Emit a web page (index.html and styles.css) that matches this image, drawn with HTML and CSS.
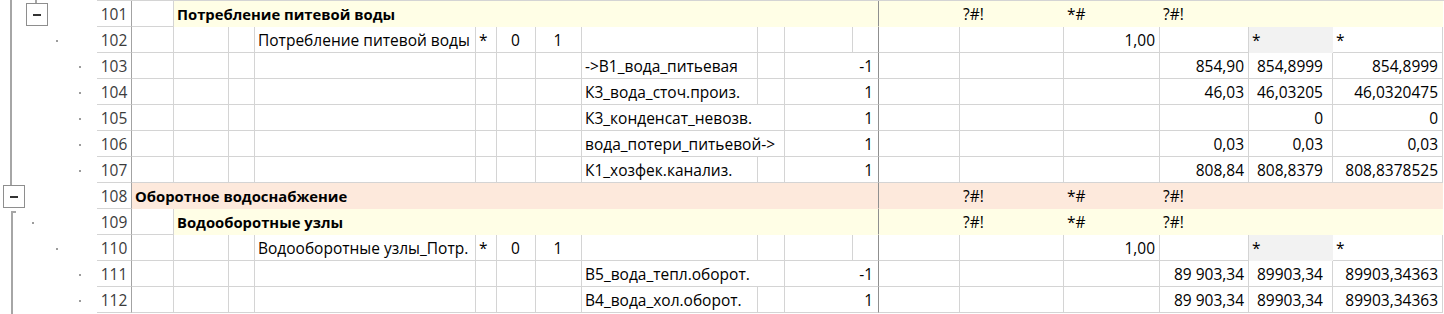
FILE: index.html
```html
<!DOCTYPE html>
<html lang="ru">
<head>
<meta charset="utf-8">
<title>Sheet</title>
<link rel="stylesheet" href="styles.css">
</head>
<body>
<div class="sheet">
  <div class="outline">
    <span class="oline oline-a"></span>
    <span class="oline oline-b"></span>
    <span class="obracket"></span>
    <div class="orow"><span class="obox l2"></span></div>
    <div class="orow"><span class="odot l3"></span></div>
    <div class="orow"><span class="odot l4"></span></div>
    <div class="orow"><span class="odot l4"></span></div>
    <div class="orow"><span class="odot l4"></span></div>
    <div class="orow"><span class="odot l4"></span></div>
    <div class="orow"><span class="odot l4"></span></div>
    <div class="orow"><span class="obox l1"></span></div>
    <div class="orow"><span class="odot l2"></span></div>
    <div class="orow"><span class="odot l3"></span></div>
    <div class="orow"><span class="odot l4"></span></div>
    <div class="orow"><span class="odot l4"></span></div>
  </div>

  <div class="grid">
    <!-- 101 -->
    <div class="row">
      <div class="hdr">101</div>
      <div></div>
      <div class="y b span-3-12 frz">Потребление питевой воды</div>
      <div class="y"></div>
      <div class="y">?#!</div>
      <div class="y">*#</div>
      <div class="y">?#!</div>
      <div class="y"></div>
      <div class="y"></div>
    </div>
    <!-- 102 -->
    <div class="row">
      <div class="hdr">102</div>
      <div></div><div></div><div></div>
      <div>Потребление питевой воды</div>
      <div>*</div>
      <div class="c">0</div>
      <div class="c">1</div>
      <div></div><div></div><div></div>
      <div class="frz"></div>
      <div></div><div></div>
      <div class="r">1,00</div>
      <div></div>
      <div class="g">*</div>
      <div>*</div>
    </div>
    <!-- 103 -->
    <div class="row">
      <div class="hdr">103</div>
      <div></div><div></div><div></div><div></div><div></div><div></div><div></div>
      <div>-&gt;В1_вода_питьевая</div>
      <div></div>
      <div class="r frz span-11-12">-1</div>
      <div></div><div></div><div></div>
      <div class="r">854,90</div>
      <div class="r p9">854,8999</div>
      <div class="r">854,8999</div>
    </div>
    <!-- 104 -->
    <div class="row">
      <div class="hdr">104</div>
      <div></div><div></div><div></div><div></div><div></div><div></div><div></div>
      <div>К3_вода_сточ.произ.</div>
      <div></div>
      <div class="r frz span-11-12">1</div>
      <div></div><div></div><div></div>
      <div class="r">46,03</div>
      <div class="r p9">46,03205</div>
      <div class="r">46,0320475</div>
    </div>
    <!-- 105 -->
    <div class="row">
      <div class="hdr">105</div>
      <div></div><div></div><div></div><div></div><div></div><div></div><div></div>
      <div class="span-9-10">К3_конденсат_невозв.</div>
      <div class="r frz span-11-12">1</div>
      <div></div><div></div><div></div>
      <div class="r"></div>
      <div class="r p9">0</div>
      <div class="r">0</div>
    </div>
    <!-- 106 -->
    <div class="row">
      <div class="hdr">106</div>
      <div></div><div></div><div></div><div></div><div></div><div></div><div></div>
      <div class="span-9-10">вода_потери_питьевой-&gt;</div>
      <div class="r frz span-11-12">1</div>
      <div></div><div></div><div></div>
      <div class="r">0,03</div>
      <div class="r p9">0,03</div>
      <div class="r">0,03</div>
    </div>
    <!-- 107 -->
    <div class="row">
      <div class="hdr">107</div>
      <div></div><div></div><div></div><div></div><div></div><div></div><div></div>
      <div>К1_хозфек.канализ.</div>
      <div></div>
      <div class="r frz span-11-12">1</div>
      <div></div><div></div><div></div>
      <div class="r">808,84</div>
      <div class="r p9">808,8379</div>
      <div class="r">808,8378525</div>
    </div>
    <!-- 108 -->
    <div class="row">
      <div class="hdr">108</div>
      <div class="o b span-2-12 frz">Оборотное водоснабжение</div>
      <div class="o"></div>
      <div class="o">?#!</div>
      <div class="o">*#</div>
      <div class="o">?#!</div>
      <div class="o"></div>
      <div class="o"></div>
    </div>
    <!-- 109 -->
    <div class="row">
      <div class="hdr">109</div>
      <div></div>
      <div class="y b span-3-12 frz">Водооборотные узлы</div>
      <div class="y"></div>
      <div class="y">?#!</div>
      <div class="y">*#</div>
      <div class="y">?#!</div>
      <div class="y"></div>
      <div class="y"></div>
    </div>
    <!-- 110 -->
    <div class="row">
      <div class="hdr">110</div>
      <div></div><div></div><div></div>
      <div>Водооборотные узлы_Потр.</div>
      <div>*</div>
      <div class="c">0</div>
      <div class="c">1</div>
      <div></div><div></div><div></div>
      <div class="frz"></div>
      <div></div><div></div>
      <div class="r">1,00</div>
      <div></div>
      <div class="g">*</div>
      <div>*</div>
    </div>
    <!-- 111 -->
    <div class="row">
      <div class="hdr">111</div>
      <div></div><div></div><div></div><div></div><div></div><div></div><div></div>
      <div class="span-9-10">В5_вода_тепл.оборот.</div>
      <div class="r frz span-11-12">-1</div>
      <div></div><div></div><div></div>
      <div class="r">89 903,34</div>
      <div class="r p9">89903,34</div>
      <div class="r">89903,34363</div>
    </div>
    <!-- 112 -->
    <div class="row">
      <div class="hdr">112</div>
      <div></div><div></div><div></div><div></div><div></div><div></div><div></div>
      <div>В4_вода_хол.оборот.</div>
      <div></div>
      <div class="r frz span-11-12">1</div>
      <div></div><div></div><div></div>
      <div class="r">89 903,34</div>
      <div class="r p9">89903,34</div>
      <div class="r">89903,34363</div>
    </div>
  </div>
</div>
</body>
</html>
```

FILE: styles.css
```css
html, body {
  margin: 0;
  padding: 0;
  background: #ffffff;
}

body {
  font-family: "Open Sans", "Liberation Sans", sans-serif;
  font-size: 15.5px;
  color: #000;
}

.sheet {
  display: flex;
  width: 1444px;
  height: 314px;
  overflow: hidden;
}

/* ---------- outline gutter ---------- */
.outline {
  position: relative;
  flex: none;
  width: 97px;
  padding-top: 1px;
}

.orow {
  display: flow-root;
  height: 26px;
}

.oline {
  position: absolute;
  background: #a6a6a6;
}

.oline-a {
  left: 10px;
  top: 0;
  width: 2px;
  height: 185px;
}

.oline-b {
  left: 35px;
  top: 0;
  width: 2px;
  height: 3px;
}

.obracket {
  position: absolute;
  left: 11px;
  top: 211px;
  width: 3px;
  height: 110px;
  border-left: 2px solid #a6a6a6;
  border-top: 2px solid #a6a6a6;
}

.obox {
  position: relative;
  display: block;
  box-sizing: border-box;
  width: 22px;
  height: 23px;
  margin-top: 2px;
  border: 1px solid #8e8e8e;
  background: #fff;
}

.obox::after {
  content: "";
  position: absolute;
  left: 6px;
  top: 10px;
  width: 8px;
  height: 2px;
  background: #333;
}

.obox.l1 { margin-left: 3px; }
.obox.l2 { margin-left: 26px; }

.odot {
  display: block;
  width: 2px;
  height: 2px;
  margin-top: 13px;
  background: #9c9c9c;
}

.odot.l2 { margin-left: 32px; }
.odot.l3 { margin-left: 56px; }
.odot.l4 { margin-left: 79px; }

/* ---------- grid ---------- */
.grid {
  flex: none;
  width: 1347px;
  border-top: 1px solid #d4d4d4;
}

.row {
  display: grid;
  grid-template-columns: 35px 42px 55px 26px 221px 21px 39px 46px 176px 27px 68px 26px 81px 104px 96px 89px 84px 110px;
  height: 26px;
}

.row > div {
  box-sizing: border-box;
  border-right: 1px solid #d4d4d4;
  border-bottom: 1px solid #d4d4d4;
  padding: 3px 4px 0 3px;
  line-height: 20px;
  white-space: nowrap;
  min-width: 0;
}

.row > .hdr {
  text-align: center;
  padding: 3px 0 0 0;
  color: #3c3c3c;
  border-right-color: #a3a3a3;
}

.r { text-align: right; }
.c { text-align: center; }
.b { font-weight: 700; font-size: 14.8px; }
.row > .p9 { padding-right: 9px; }
.row > .span-11-12 { padding-right: 5px; }

.row > .frz { border-right-color: #8f8f8f; }

.row > .y {
  background: #fffee6;
  border-right-color: transparent;
  border-bottom-color: transparent;
}

.row > .o {
  background: #fde9dc;
  border-right-color: transparent;
  border-bottom-color: transparent;
}

.row > .g {
  background: #f2f2f2;
  border-right-color: transparent;
  border-bottom-color: transparent;
}

.row > .y.frz,
.row > .o.frz { border-right-color: #8f8f8f; }

.span-3-12 { grid-column: 3 / 13; }
.span-2-12 { grid-column: 2 / 13; }
.span-9-10 { grid-column: 9 / 11; }
.span-11-12 { grid-column: 11 / 13; }
```
